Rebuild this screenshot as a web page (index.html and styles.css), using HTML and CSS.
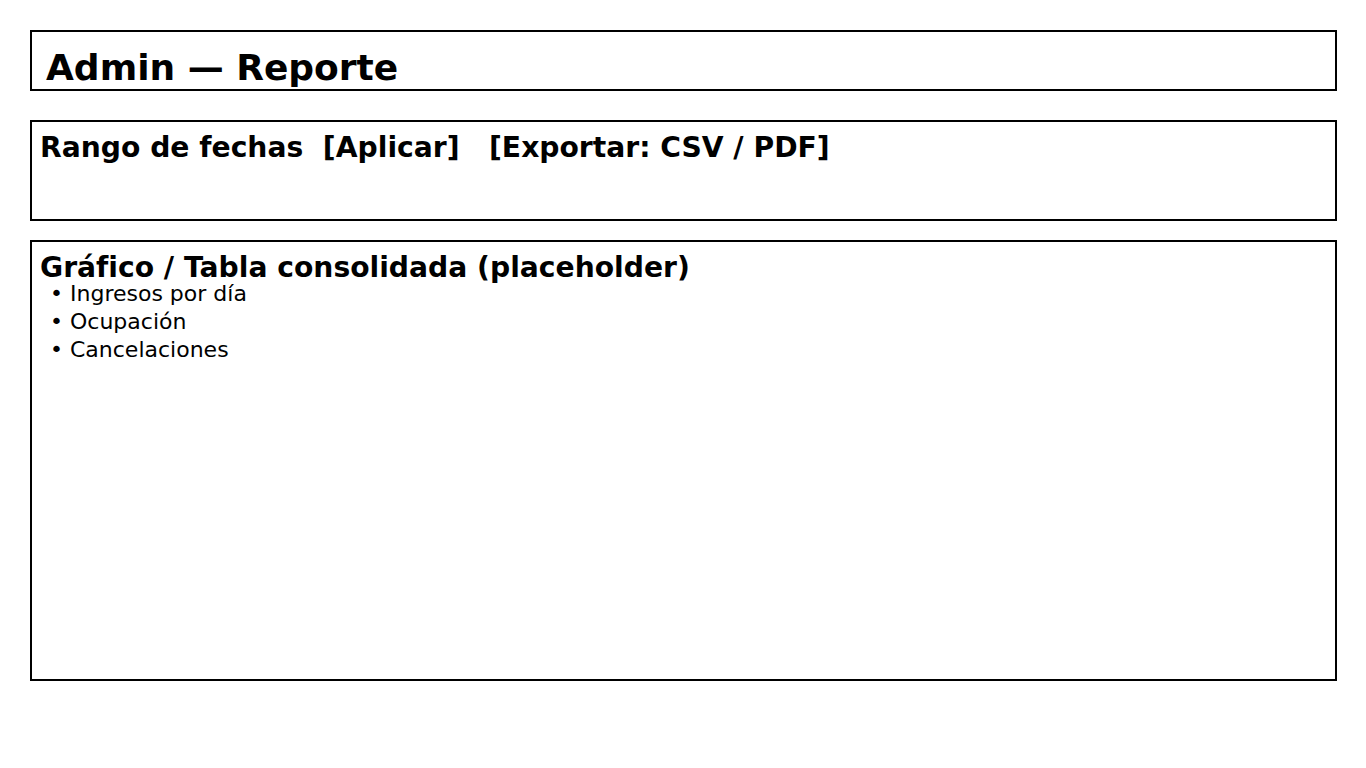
FILE: index.html
```html
<!DOCTYPE html>
<html lang="es">
<head>
    <meta charset="UTF-8">
    <meta name="viewport" content="width=device-width, initial-scale=1.0">
    <title>Admin — Reporte</title>
    <link rel="stylesheet" href="styles.css">
</head>
<body>
    <div class="page">
        <!-- Header -->
        <div class="box header-box">
            <h1>Admin — Reporte</h1>
        </div>

        <!-- Filters -->
        <div class="box filter-box">
            <h2 class="filter-line">Rango de fechas  [Aplicar]   [Exportar: CSV / PDF]</h2>
        </div>

        <!-- Report area -->
        <div class="box report-box">
            <h2>Gráfico / Tabla consolidada (placeholder)</h2>
            <ul class="report-list">
                <li>Ingresos por día</li>
                <li>Ocupación</li>
                <li>Cancelaciones</li>
            </ul>
        </div>
    </div>
</body>
</html>
```

FILE: styles.css
```css
body {
    font-family: "DejaVu Sans", sans-serif;
    background-color: #fff;
    color: #000;
    margin: 0;
    padding: 0;
}

.page {
    display: flex;
    flex-direction: column;
    padding: 30px 29px 0 30px;
}

.box {
    box-sizing: border-box;
    border: 2px solid #000;
}

.header-box {
    height: 61px;
    padding: 14px 14px 0;
}

.filter-box {
    height: 101px;
    margin-top: 29px;
    padding: 13px 8px 0;
}

.report-box {
    height: 441px;
    margin-top: 19px;
    padding: 13px 8px 0;
}

h1 {
    margin: 0;
    font-size: 36px;
    line-height: 44px;
    font-weight: bold;
}

h2 {
    margin: 0;
    font-size: 28.2px;
    line-height: 25px;
    font-weight: bold;
}

.filter-line {
    white-space: pre;
}

.report-list {
    list-style: none;
    margin: 0;
    padding: 0 0 0 10px;
    font-size: 22px;
    line-height: 28px;
}

.report-list li::before {
    content: "• ";
}
```
